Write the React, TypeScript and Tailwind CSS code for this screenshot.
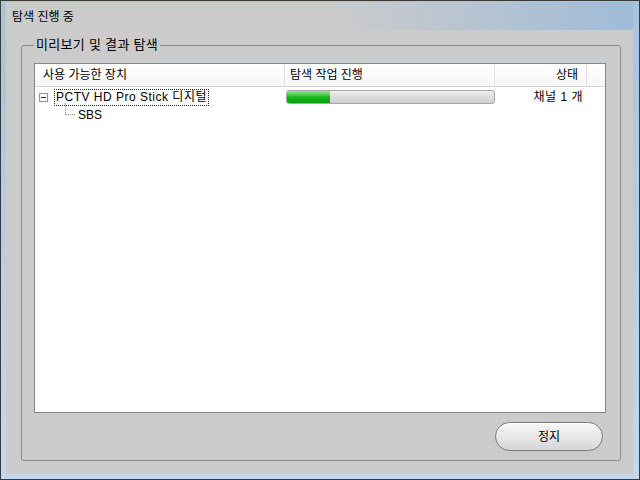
import React from "react";

function TreeToggle() {
  return (
    <div className="w-[9px] h-[9px] border border-[#919191] bg-white flex items-center justify-center shrink-0">
      <div className="w-[5px] h-px bg-[#333]" />
    </div>
  );
}

function ProgressBar({ value }: { value: number }) {
  return (
    <div className="relative w-[209px] h-[14px] rounded-[3px] border border-[#a8a8a8] bg-gradient-to-b from-[#f1f1f1] via-[#dcdcdc] to-[#cfcfcf] overflow-hidden">
      <div
        className="h-full bg-gradient-to-b from-[#8ee88e] via-[#14b814] to-[#0d9a0d]"
        style={{ width: `${value}%` }}
      />
    </div>
  );
}

export default function App() {
  return (
    <div className="w-[640px] h-[480px] bg-gradient-to-b from-[#a9c3dd] to-[#c3d8ec] border border-[#3a3a3a] pl-[5px] pr-[6px] pb-[5px] pt-px font-['Liberation_Sans','Noto_Sans_CJK_KR',sans-serif] text-[12px] text-black">
      <div className="h-full flex flex-col bg-[#cbcbcb] relative">
        <div className="absolute top-0 right-0 h-[28px] w-[300px] bg-gradient-to-r from-transparent to-[#9fbcd8] pointer-events-none" />
        <div className="h-[30px] pl-[6px] flex items-center relative">탐색 진행 중</div>

        <div className="relative flex-1 flex flex-col mt-[13px] ml-[15px] mr-[12px] mb-[13px] border border-[#8c8c8c] rounded-[3px] pl-[12px] pr-[14px] pt-[17px] pb-[9px]">
          <span className="absolute -top-[9px] left-[12px] px-[2px] bg-[#cbcbcb] text-[13px] leading-[16px] tracking-[0.3px]">
            미리보기 및 결과 탐색
          </span>

          <div className="flex-1 border border-[#828790] bg-white flex flex-col">
            <div className="h-[23px] flex border-b border-[#d5d5d5] bg-gradient-to-b from-white to-[#f7f7f7]">
              <div className="w-[250px] pl-[8px] flex items-center border-r border-[#e3e3e3]">사용 가능한 장치</div>
              <div className="w-[210px] pl-[5px] flex items-center border-r border-[#e3e3e3]">탐색 작업 진행</div>
              <div className="w-[92px] pr-[8px] flex items-center justify-end border-r border-[#e3e3e3]">상태</div>
              <div className="flex-1" />
            </div>

            <div className="h-[18px] mt-px flex items-center">
              <div className="w-[250px] flex items-center pl-[4px] gap-[6px]">
                <TreeToggle />
                <span className="border border-dotted border-[#222] px-[1px] leading-[15px] tracking-[0.5px]">PCTV HD Pro Stick 디지털</span>
              </div>
              <div className="w-[210px] flex items-center pl-px">
                <ProgressBar value={21} />
              </div>
              <div className="w-[88px] text-right tracking-[0.5px]">채널 1 개</div>
            </div>

            <div className="h-[18px] flex items-center relative">
              <div className="absolute left-[30px] -top-[3px] h-[12px] border-l border-dotted border-[#9a9a9a]" />
              <div className="absolute left-[30px] top-[8px] w-[10px] border-t border-dotted border-[#9a9a9a]" />
              <span className="pl-[43px]">SBS</span>
            </div>
          </div>

          <div className="flex justify-end pt-[9px]">
            <button className="w-[108px] h-[29px] mr-[3px] rounded-full border border-[#7a7a7a] bg-gradient-to-b from-[#f7f7f7] via-[#e8e8e8] to-[#d6d6d6] shadow-[inset_0_1px_0_#fff] text-[12px]">
              정지
            </button>
          </div>
        </div>
      </div>
    </div>
  );
}
